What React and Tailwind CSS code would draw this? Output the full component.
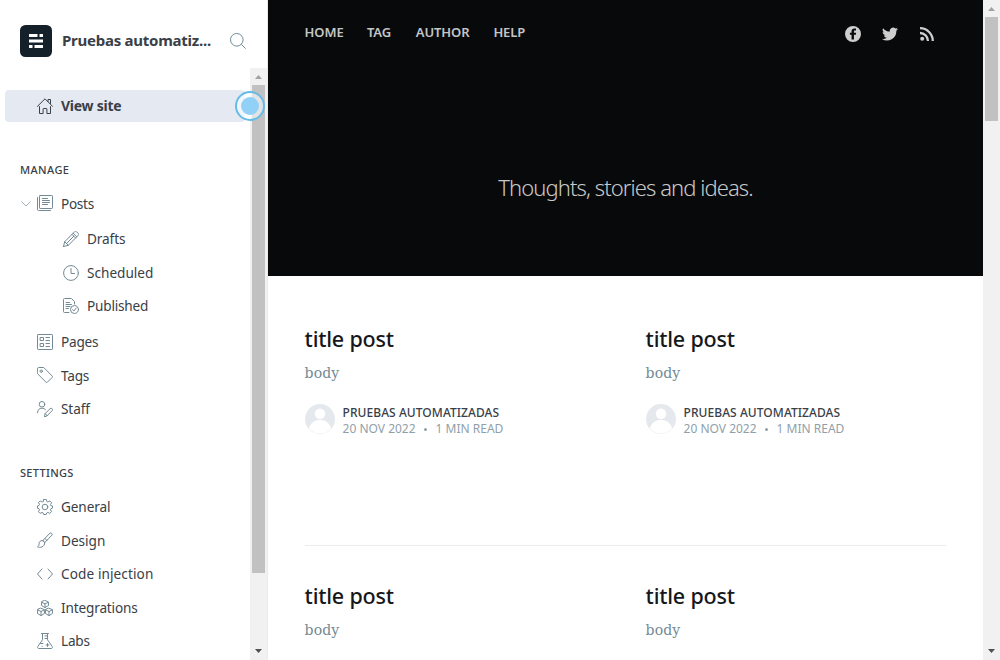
import React from 'react';

const S = ({ children, className = '' }) => (
  <svg className={`h-4 w-4 shrink-0 ${className}`} viewBox="0 0 16 16" fill="none" stroke="currentColor" strokeWidth="1" strokeLinecap="round" strokeLinejoin="round">
    {children}
  </svg>
);

const icons = {
  home: <path d="M.4 8.400 8 .8l7.600 7.600M2.500 8.600v6.900h3.600v-4.500a.5.5 0 0 1 .5-.5h2.800a.5.5 0 0 1 .5.5v4.500h3.600V8.600M11 3.500V1.500h2.500v4" />,
  posts: <><rect x="2.500" y=".5" width="13" height="13" rx=".7" /><path d="M.5 2.500v12a1 1 0 0 0 1 1h12M5.500 3.500h5M5.500 5.500h7M5.500 7.500h7M5.500 9.500h5" /></>,
  pencil: <path d="m.5 15.500 1.200-4.800L11.500.9a1.500 1.500 0 0 1 2.200 0l1.400 1.400a1.500 1.500 0 0 1 0 2.200L5.300 14.300.5 15.500ZM1.700 10.700l3.600 3.600M10.200 2.200l3.600 3.600M9 3.400 12.600 7M3.500 12.500l7.300-7.300" />,
  clock: <><circle cx="8" cy="8" r="7.400" /><path d="M8 3.500v5h3.500" /></>,
  published: <><path d="M6 14.500H1.500a1 1 0 0 1-1-1v-12a1 1 0 0 1 1-1h7l3 3V6M3 4.500h3.500M3 6.500h5.500M3 8.500h4M3 10.500h2.500" /><circle cx="11.500" cy="11.500" r="4" /><path d="m9.500 11.700 1.400 1.300 2.400-3" /></>,
  pages: <><rect x=".5" y=".5" width="15" height="15" rx=".7" /><path d="M3.500 3.500h3v3h-3zM3.500 9.500h3v3h-3zM9 3.500h3.500M9 6.500h3.500M9 9.500h3.500M9 12.500h3.500" /></>,
  tag: <><path d="M.5 1.500a1 1 0 0 1 1-1h5.200l8.500 8.500a1 1 0 0 1 0 1.400l-4.800 4.800a1 1 0 0 1-1.400 0L.5 6.700Z" /><circle cx="4.200" cy="4.200" r="1.200" /></>,
  staff: <><circle cx="5" cy="3.300" r="2.800" /><path d="M.5 11.800c0-3 2-4.600 4.500-4.600 1.500 0 2.700.6 3.500 1.500M7.500 15.500l.7-3 4.900-4.800a1.300 1.300 0 0 1 2 2l-4.900 5ZM8.200 12.500l2 2.200" /></>,
  gear: <><circle cx="8" cy="8" r="2.800" /><path d="M6.700.5h2.600l.6 2.100 1 .4 2-1 1.600 1.700-1 2 .4 1 1.600.3v2l-1.600.8-.4 1 1 2-1.700 1.600-2-1-1 .5-.6 1.600H6.700l-.6-1.600-1-.5-2 1-1.600-1.700 1-2-.5-1L.5 9.300V6.900L2 6.500l.5-1-1-2L3.200 2l2 1 1-.4Z" /></>,
  brush: <path d="M5.700 8.600 13 1.100a1.500 1.500 0 0 1 2 2L7.700 10.600M5.700 8.600c-2.800-.5-3.600 1.600-3.600 3.300 0 1.300-.6 2.300-1.600 2.900 2.300 1.200 7.300.8 7.200-4.200ZM5.700 8.600l2 2M8 6.500l2 2" />,
  code: <path d="M5 3 .5 8 5 13M11 3l4.500 5-4.500 5" />,
  blocks: <path d="m8 .4 3.300 1.600.3 3.400L8 7.600 4.400 5.400 4.700 2ZM4.700 2.300 8 3.900l3.300-1.600M8 3.900v3.500M4 8.300l3.300 1.300.3 3.800L4 15.600.4 13.400l.3-3.800ZM.7 9.900 4 11.500l3.300-1.600M4 11.500v4M12 8.300l3.300 1.300.3 3.800-3.600 2.200-3.600-2.200.3-3.800ZM8.700 9.900 12 11.500l3.300-1.600M12 11.500v4" />,
  flask: <path d="M4.500.5h7M5.500.5v6.300L.8 13.500c-.6 1 0 2 1 2h12.400c1 0 1.600-1 1-2L10.500 6.800V.5M3 10.500h3M8 3h2.500M8 5.500h2.500M10.500 10.500v3M9 12h3M5 13.300h.2" />,
};

const Row = ({ icon, label, sub, h = 'h-[34px]', w = '', arrow, lift }) => (
  <div className={`flex items-center ${h} ${sub ? 'pl-[63px]' : arrow ? 'pl-[21px]' : 'pl-[37px]'}`}>
    {arrow && (
      <svg className="mr-[6px] h-[6px] w-[10px] shrink-0 text-[#a5b1ba]" viewBox="0 0 10 6" fill="none" stroke="currentColor"><path d="M.5.500 5 5 9.500.500" /></svg>
    )}
    <S className={`text-[#738a94] ${lift ? 'mb-[2px]' : ''}`}>{icons[icon]}</S>
    <span className={`ml-2 whitespace-nowrap text-[13.600px] leading-[20px] text-[#394047] ${w}`}>{label}</span>
  </div>
);

const Arrow = ({ down, dim }) => (
  <svg className={`h-[17px] w-[17px] shrink-0 ${dim ? 'text-[#a3a3a3]' : 'text-[#505050]'}`} viewBox="0 0 17 17" fill="currentColor">
    <path d={down ? 'M5 6h7L8.500 10z' : 'M5 11h7L8.500 7z'} />
  </svg>
);

const Heading = ({ children, className }) => (
  <div className={`pl-5 text-[11px] leading-[16px] font-medium whitespace-nowrap text-[#394047] ${className}`}>{children}</div>
);

const Post = ({ className = '', short }) => (
  <article className={`w-[300px] ${className}`}>
    <h2 className="h-[26px] whitespace-nowrap text-[21.500px] leading-[26px] font-medium tracking-[-0.2px] text-[#15171a]">title post</h2>
    <p className="mt-[8px] font-['DejaVu_Serif_Condensed','DejaVu_Serif',serif] text-[15.600px] leading-[26px] tracking-[0.1px] text-[#738a94] [font-stretch:condensed]">body</p>
    {!short && (
      <div className="mt-[18px] flex">
        <svg className="h-[30px] w-[30px]" viewBox="0 0 30 30">
          <circle cx="15" cy="15" r="15" fill="#e5e9ed" />
          <circle cx="15" cy="9.800" r="5.200" fill="#fff" />
          <path d="M3.800 24.500C5.500 18.500 10 16 15 16s9.500 2.500 11.200 8.500C23 28 19 29.400 15 29.400S7 28 3.800 24.500Z" fill="#fff" />
        </svg>
        <div className="mt-px ml-2 text-[12px] leading-[16px] whitespace-nowrap">
          <div className="font-medium tracking-[0.060px] text-[#394047]">PRUEBAS AUTOMATIZADAS</div>
          <div className="flex items-center text-[#90a0a9]">
            <span>20 NOV 2022</span>
            <span className="mx-[8.500px] h-[3px] w-[3px] rounded-full bg-[#90a0a9]" />
            <span>1 MIN READ</span>
          </div>
        </div>
      </div>
    )}
  </article>
);

export default function App() {
  return (
    <div className="flex h-[660px] w-[1000px] overflow-hidden bg-white font-['Noto_Sans','Open_Sans',sans-serif]">
      <aside className="relative flex w-[268px] shrink-0 flex-col border-r border-[#e9ebf3]">
        <header className="flex h-[68px] shrink-0 items-start pl-5 pt-[25px]">
          <svg className="h-8 w-8 shrink-0" viewBox="0 0 32 32">
            <rect width="32" height="32" rx="5.500" fill="#15212a" />
            <path d="M9 9h8.500v3H9zM19.500 9h3.500v3h-3.500zM9 14.500h14v3H9zM9 20h3.500v3H9zM14.500 20h8.500v3h-8.500z" fill="#fff" />
          </svg>
          <span className="ml-[10px] w-[168px] text-[15px] leading-[30px] font-bold tracking-[-0.250px] whitespace-nowrap text-[#394047]">Pruebas automatiz...</span>
          <svg className="mt-2 h-[16px] w-[16px] shrink-0 text-[#738a94]" viewBox="0 0 16 16" fill="none" stroke="currentColor"><circle cx="6.800" cy="6.800" r="6.300" /><path d="m11.300 11.300 4.300 4.300" /></svg>
        </header>
        <div className="flex min-h-0 flex-1">
          <nav className="w-[250px] shrink-0 pt-[22px]">
            <div className="mr-[5px] ml-[5px] flex h-8 items-center rounded-[4px] bg-[#e5eaf2] pl-8">
              <S className="text-[#394047]">{icons.home}</S>
              <span className="mb-[2px] ml-2 text-[14px] font-bold tracking-[-0.250px] whitespace-nowrap text-[#394047]">View site</span>
            </div>
            <Heading className="mt-[40px] tracking-[0.4px]">MANAGE</Heading>
            <div className="mt-[9px]">
              <Row icon="posts" label="Posts" arrow lift w="tracking-[-0.3px]" />
              <div className="my-px">
                <Row icon="pencil" label="Drafts" sub w="tracking-[-0.1px]" />
                <Row icon="clock" label="Scheduled" sub />
                <Row icon="published" label="Published" sub h="h-[32px]" w="tracking-[-0.2px]" />
              </div>
              <div className="mt-[3px]">
                <Row icon="pages" label="Pages" w="tracking-[-0.2px]" />
              </div>
              <Row icon="tag" label="Tags" h="h-[33px]" lift w="tracking-[-0.2px]" />
              <Row icon="staff" label="Staff" w="tracking-[-0.1px]" />
            </div>
            <Heading className="mt-[39px] tracking-[0.3px]">SETTINGS</Heading>
            <div className="mt-[9px]">
              <Row icon="gear" label="General" w="tracking-[-0.1px]" />
              <Row icon="brush" label="Design" h="h-[33px]" lift />
              <Row icon="code" label="Code injection" w="tracking-[0.1px]" />
              <Row icon="blocks" label="Integrations" h="h-[33px]" w="tracking-[-0.150px]" />
              <Row icon="flask" label="Labs" w="tracking-[-0.2px]" />
            </div>
          </nav>
          <div className="flex w-[17px] flex-col bg-[#f1f1f1]">
            <Arrow dim />
            <div className="mx-[2px] h-[488px] bg-[#c1c1c1]" />
            <div className="flex-1" />
            <Arrow down />
          </div>
        </div>
        <svg className="absolute left-[234px] top-[90px] h-8 w-8" viewBox="0 0 32 32">
          <circle cx="16" cy="16" r="14" fill="#fff" fillOpacity=".55" stroke="#65bbe8" strokeWidth="2" />
          <circle cx="16" cy="16" r="9" fill="#92d1f7" />
        </svg>
      </aside>

      <main className="flex w-[715px] shrink-0 flex-col">
        <section className="h-[276px] shrink-0 bg-[#08090b] px-[36.600px]">
          <div className="flex h-[66px] items-center text-[13px] font-semibold tracking-[-0.1px] text-[#c4c5c5]">
            <nav className="flex whitespace-nowrap">
              <a className="w-[62.400px]">HOME</a>
              <a className="w-[48.800px]">TAG</a>
              <a className="w-[77.600px]">AUTHOR</a>
              <a>HELP</a>
            </nav>
            <div className="mt-[2px] ml-auto mr-[11.400px] flex items-center gap-[21px] text-[#cecece]">
              <svg className="h-4 w-4" viewBox="0 0 32 32" fill="currentColor"><path d="M16 0a16 16 0 1 0 0 32 16 16 0 0 0 0-32Zm6 9.200h-2.400c-1.400 0-1.700.7-1.700 1.700v2.400h4.300l-.5 4.200h-3.800V27H13.100v-9.500H9.800v-4.200h3.300v-2.600c0-3.700 2.200-5.700 5.500-5.700 1.600 0 2.900.1 3.400.2v4Z" /></svg>
              <svg className="h-4 w-4" viewBox="0 0 24 24" fill="currentColor"><path d="M24 4.600a10 10 0 0 1-2.800.8 5 5 0 0 0 2.100-2.700 10 10 0 0 1-3.100 1.200 4.900 4.900 0 0 0-8.400 4.500A14 14 0 0 1 1.700 3.200a4.900 4.900 0 0 0 1.500 6.500 5 5 0 0 1-2.200-.6 4.900 4.900 0 0 0 3.900 4.900 5 5 0 0 1-2.200.1 4.900 4.900 0 0 0 4.600 3.400A10 10 0 0 1 0 19.500a14 14 0 0 0 21.500-12.400A10 10 0 0 0 24 4.600Z" /></svg>
              <svg className="h-4 w-4" viewBox="0 0 16 16"><circle cx="3.200" cy="12.800" r="2" fill="currentColor" /><path d="M1 7a8 8 0 0 1 8 8M1 2.200A12.800 12.800 0 0 1 13.800 15" fill="none" stroke="currentColor" strokeWidth="2.300" /></svg>
            </div>
          </div>
          <p className="mt-[105px] text-center text-[22px] leading-[32px] font-light whitespace-nowrap text-[#c8c9c9]"><span className="tracking-[-0.920px]">Thoughts, stories and ideas.</span></p>
        </section>
        <div className="mx-[36.600px] mt-[50px] flex h-[220px] shrink-0 border-b border-[#eaeded]">
          <Post /><Post className="ml-[41px]" />
        </div>
        <div className="mx-[36.600px] mt-[37px] flex">
          <Post short /><Post short className="ml-[41px]" />
        </div>
      </main>
      <div className="flex w-[17px] shrink-0 flex-col bg-[#f1f1f1]">
        <Arrow dim />
        <div className="mx-[2px] h-[104px] bg-[#c1c1c1]" />
        <div className="flex-1" />
        <Arrow down />
      </div>
    </div>
  );
}
